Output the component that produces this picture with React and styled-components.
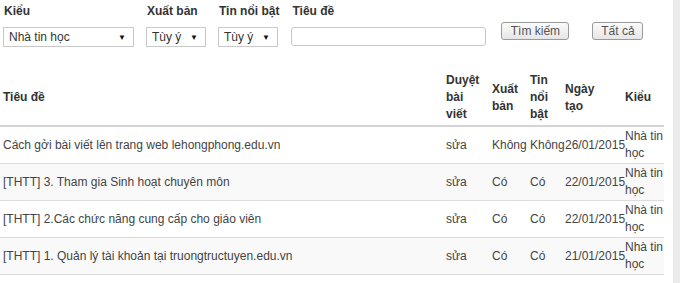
import React from "react";
import styled, { createGlobalStyle } from "styled-components";

const GlobalStyle = createGlobalStyle`
  html, body {
    margin: 0;
    padding: 0;
    background: #fff;
  }
  body {
    font-family: "Liberation Sans", Arial, sans-serif;
    font-size: 12px;
    color: #333;
  }
`;

const posts = [
  { title: "Cách gởi bài viết lên trang web lehongphong.edu.vn", pub: "Không", hot: "Không", date: "26/01/2015" },
  { title: "[THTT] 3. Tham gia Sinh hoạt chuyên môn", pub: "Có", hot: "Có", date: "22/01/2015" },
  { title: "[THTT] 2.Các chức năng cung cấp cho giáo viên", pub: "Có", hot: "Có", date: "22/01/2015" },
  { title: "[THTT] 1. Quản lý tài khoản tại truongtructuyen.edu.vn", pub: "Có", hot: "Có", date: "21/01/2015" },
];

const columns = [
  { label: "Tiêu đề", width: 443 },
  { label: "Duyệt bài viết", width: 46 },
  { label: "Xuất bản", width: 38 },
  { label: "Tin nổi bật", width: 35 },
  { label: "Ngày tạo", width: 60 },
  { label: "Kiểu", width: 42 },
];

export default function App() {
  return (
    <>
      <GlobalStyle />
      <Page>
        <Main>
          <Filters>
            <Field>
              <Label>Kiểu</Label>
              <SelectBox width={131}>
                <Select defaultValue="nth">
                  <option value="nth">Nhà tin học</option>
                </Select>
                <Arrow>▼</Arrow>
              </SelectBox>
            </Field>
            <Field>
              <Label>Xuất bản</Label>
              <SelectBox width={60}>
                <Select defaultValue="any">
                  <option value="any">Tùy ý</option>
                </Select>
                <Arrow>▼</Arrow>
              </SelectBox>
            </Field>
            <Field>
              <Label>Tin nổi bật</Label>
              <SelectBox width={60}>
                <Select defaultValue="any">
                  <option value="any">Tùy ý</option>
                </Select>
                <Arrow>▼</Arrow>
              </SelectBox>
            </Field>
            <Field>
              <Label>Tiêu đề</Label>
              <TextInput type="text" />
            </Field>
            <Button width={68}>Tìm kiếm</Button>
            <Button width={51}>Tất cả</Button>
          </Filters>

          <Table>
            <colgroup>
              {columns.map((c) => (
                <col key={c.label} style={{ width: c.width }} />
              ))}
            </colgroup>
            <thead>
              <tr>
                {columns.map((c) => (
                  <Th key={c.label}>{c.label}</Th>
                ))}
              </tr>
            </thead>
            <tbody>
              {posts.map((p) => (
                <Row key={p.title}>
                  <Td>{p.title}</Td>
                  <Td>sửa</Td>
                  <Td>{p.pub}</Td>
                  <Td>{p.hot}</Td>
                  <Td>{p.date}</Td>
                  <Td>Nhà tin học</Td>
                </Row>
              ))}
            </tbody>
          </Table>
        </Main>
        <SideStrip />
      </Page>
    </>
  );
}

const Page = styled.div`
  display: flex;
  width: 680px;
  height: 283px;
  overflow: hidden;
`;

const Main = styled.div`
  width: 665px;
  margin-right: 8px;
`;

const SideStrip = styled.div`
  flex: 1;
  background: #ebebeb;
`;

const Filters = styled.div`
  display: flex;
  align-items: flex-end;
  padding: 3px 0 0 3px;
  height: 44px;
`;

const Field = styled.div`
  display: flex;
  flex-direction: column;
  margin-right: 12px;
`;

const Label = styled.div`
  font-weight: bold;
  color: #333;
  line-height: 14px;
  margin-bottom: 9px;
  padding-left: 1px;
`;

const SelectBox = styled.label`
  display: flex;
  align-items: center;
  box-sizing: border-box;
  width: ${(p) => p.width}px;
  height: 20px;
  border: 1px solid #c8c8c8;
  background: #fff;
  padding: 0 7px 0 5px;
`;

const Select = styled.select`
  flex: 1;
  min-width: 0;
  appearance: none;
  border: none;
  background: transparent;
  padding: 0;
  font-family: inherit;
  font-size: 12px;
  color: #333;
  outline: none;
`;

const Arrow = styled.span`
  font-size: 8px;
  color: #111;
`;

const TextInput = styled.input`
  box-sizing: border-box;
  width: 195px;
  height: 19px;
  margin-bottom: 1px;
  border: 1px solid #c8c8c8;
  border-radius: 3px;
  padding: 0 3px;
  font-family: inherit;
  font-size: 12px;
`;

const Button = styled.button`
  box-sizing: border-box;
  width: ${(p) => p.width}px;
  height: 18px;
  margin: 0 20px 7px 3px;
  padding: 0;
  border: 1px solid #9a9a9a;
  border-radius: 3px;
  background: linear-gradient(#fbfbfb, #e6e6e6);
  font-family: inherit;
  font-size: 12px;
  color: #555;
  line-height: 16px;
`;

const Table = styled.table`
  width: 664px;
  table-layout: fixed;
  margin-top: 15px;
  border-collapse: collapse;
`;

const Th = styled.th`
  text-align: left;
  vertical-align: middle;
  font-weight: bold;
  color: #333;
  line-height: 17px;
  padding: 10px 8px 2px 3px;
  border-bottom: 2px solid #d4d4d4;
`;

const Row = styled.tr`
  &:nth-child(even) {
    background: #f9f9f9;
  }
`;

const Td = styled.td`
  color: #444;
  line-height: 17px;
  vertical-align: middle;
  padding: 1px 0 1px 3px;
  border-bottom: 1px solid #dcdcdc;
`;
